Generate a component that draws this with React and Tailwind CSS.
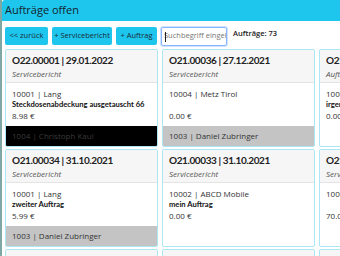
const rows = [
  [
    {
      title: 'O22.00001 | 29.01.2022',
      type: 'Servicebericht',
      customer: '10001 | Lang',
      text: 'Steckdosenabdeckung ausgetauscht 66',
      price: '8.98 €',
      footer: '1004 | Christoph Kaul',
      dark: true,
    },
    {
      title: 'O21.00036 | 27.12.2021',
      type: 'Servicebericht',
      customer: '10004 | Metz Tirol',
      text: '',
      price: '0.00 €',
      footer: '1003 | Daniel Zubringer',
    },
    {
      title: 'O21.00035 | 20.12.2021',
      type: 'Auftrag',
      customer: '10003 | Huber',
      text: 'irgendwas',
      price: '0.00 €',
    },
  ],
  [
    {
      title: 'O21.00034 | 31.10.2021',
      type: 'Servicebericht',
      customer: '10001 | Lang',
      text: 'zweiter Auftrag',
      price: '5.99 €',
      footer: '1003 | Daniel Zubringer',
    },
    {
      title: 'O21.00033 | 31.10.2021',
      type: 'Servicebericht',
      customer: '10002 | ABCD Mobile',
      text: 'mein Auftrag',
      price: '0.00 €',
    },
    {
      title: 'O21.00032 | 31.10.2021',
      type: 'Servicebericht',
      customer: '10003 | Huber',
      text: '',
      price: '70.00 €',
    },
  ],
  [
    { title: 'O21.00031 | 30.10.2021', type: 'Servicebericht', customer: '10001 | Lang', text: '', price: '0.00 €' },
    { title: 'O21.00030 | 30.10.2021', type: 'Servicebericht', customer: '10001 | Lang', text: '', price: '0.00 €' },
    { title: 'O21.00029 | 30.10.2021', type: 'Servicebericht', customer: '10001 | Lang', text: '', price: '0.00 €' },
  ],
];

const lato = { fontFamily: 'Lato, "Open Sans", sans-serif' };

const OrderCard = ({ order }) => (
  <div className="w-[153px] h-[98px] shrink-0 flex flex-col border border-[#a9e7f4] rounded-[2px] bg-white overflow-hidden">
    <div className="h-[33px] shrink-0 bg-[#f6f6f6] border-b border-[#e4e4e4] px-[6px] pt-[3px]">
      <div
        className="text-[10px] leading-[15px] font-bold tracking-[-0.4px] text-[#222] whitespace-nowrap"
        style={lato}
      >
        {order.title}
      </div>
      <div className="text-[8px] leading-[12px] italic text-[#555] whitespace-nowrap">
        {order.type}
      </div>
    </div>
    <div className="flex-1 px-[6px] pt-[5px] text-[8px] leading-[11px] text-[#333] whitespace-nowrap">
      <div>{order.customer}</div>
      <div className="font-bold text-[#111] h-[11px] text-[7.6px]" style={lato}>
        {order.text}
      </div>
      <div>{order.price}</div>
    </div>
    {order.footer ? (
      <div
        className={
          order.dark
            ? 'h-[20px] shrink-0 bg-black text-[#3a3a3a] text-[8px] leading-[20px] px-[6px] whitespace-nowrap'
            : 'h-[20px] shrink-0 bg-[#c4c4c4] text-[#333] text-[8px] leading-[20px] px-[6px] whitespace-nowrap'
        }
      >
        {order.footer}
      </div>
    ) : null}
  </div>
);

const App = () => {
  return (
    <div
      className="w-[340px] h-[256px] overflow-hidden bg-white border-l-2 border-[#7fa7a4]"
      style={{ fontFamily: '"Open Sans", "Noto Sans", sans-serif' }}
    >
      <div className="h-[21px] bg-[#1ec6ee] rounded-tl-[3px] flex items-center px-[3px]">
        <span className="text-[11px] text-[#15232b]">Aufträge offen</span>
      </div>
      <div className="flex items-center gap-[4px] pl-[3px] pt-[4px] h-[26px]">
        <button className="h-[18px] w-[43px] bg-[#1ec6ee] rounded-[2px] text-[7.5px] text-[#1b2a33]">
          &lt;&lt; zurück
        </button>
        <button className="h-[18px] w-[60px] bg-[#1ec6ee] rounded-[2px] text-[7.5px] text-[#1b2a33]">
          + Servicebericht
        </button>
        <button className="h-[18px] w-[41px] bg-[#1ec6ee] rounded-[2px] text-[7.5px] text-[#1b2a33]">
          + Auftrag
        </button>
        <div className="relative h-[19px] w-[66px] border border-[#86b7fe] rounded-[2px] shadow-[0_0_0_1px_#cfe2ff] overflow-hidden flex items-center pl-[2px]">
          <span className="text-[7.5px] text-[#777] whitespace-nowrap">Suchbegriff eingeben</span>
          <span className="absolute left-[3px] top-[4px] w-px h-[10px] bg-[#222]" />
        </div>
        <span className="ml-[2px] text-[7.5px] font-semibold text-[#222] self-start mt-[3px]">Aufträge: 73</span>
      </div>
      <div className="flex flex-col gap-[2px] pl-[3px] pt-[2px]">
        {rows.map((row, i) => (
          <div key={i} className="flex gap-[4px]">
            {row.map((order) => (
              <OrderCard key={order.title} order={order} />
            ))}
          </div>
        ))}
      </div>
    </div>
  );
};

export default App;
